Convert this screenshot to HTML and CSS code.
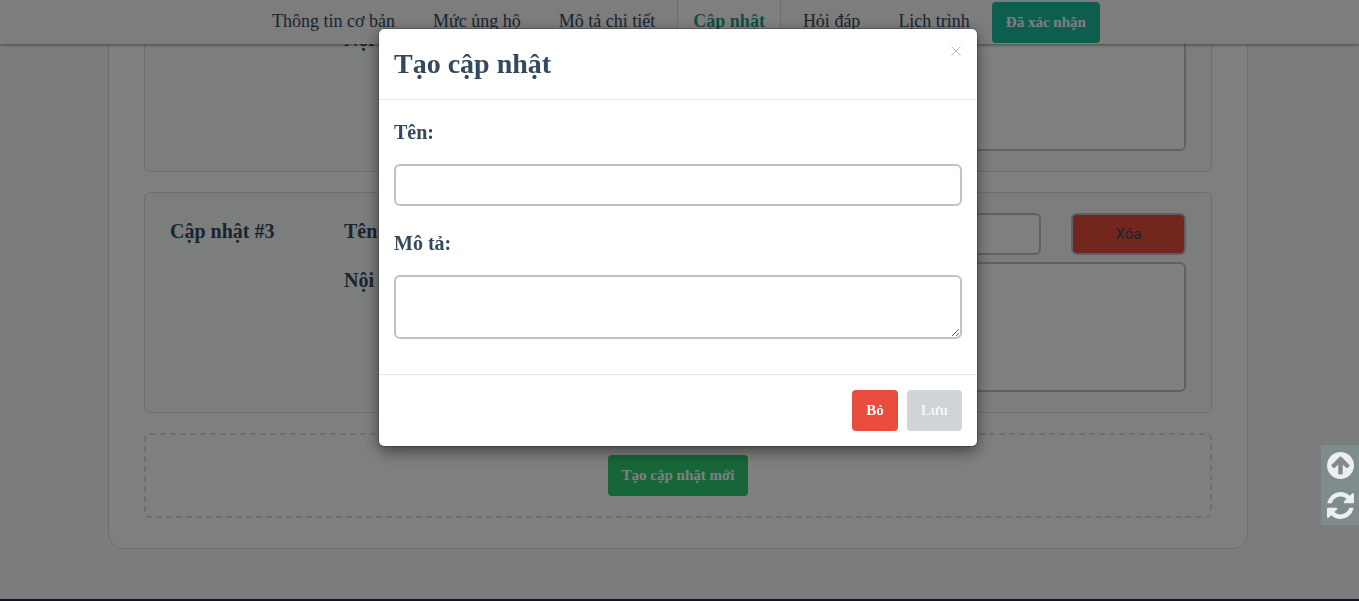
FILE: index.html
```html
<!DOCTYPE html>
<html lang="vi">
<head>
<meta charset="utf-8">
<meta name="viewport" content="width=device-width, initial-scale=1">
<title>Cập nhật</title>
<link rel="stylesheet" href="styles.css">
</head>
<body>
<header class="topbar">
  <nav class="tabs">
    <a class="tab" href="#info">Thông tin cơ bản</a>
    <a class="tab" href="#levels">Mức ủng hộ</a>
    <a class="tab" href="#detail">Mô tả chi tiết</a>
    <a class="tab tab-active" href="#updates">Cập nhật</a>
    <a class="tab" href="#faq">Hỏi đáp</a>
    <a class="tab" href="#schedule">Lịch trình</a>
    <button class="btn btn-verified" type="button">Đã xác nhận</button>
  </nav>
</header>

<main class="page">
  <section class="panel">
    <article class="card">
      <h2 class="card-title">Cập nhật #2</h2>
      <div class="fields">
        <label class="label" for="name2">Tên:</label>
        <input class="control" id="name2" type="text">
        <button class="control btn-delete" type="button">Xóa</button>
        <label class="label" for="body2">Nội dung:</label>
        <textarea class="control content" id="body2"></textarea>
      </div>
    </article>
    <article class="card">
      <h2 class="card-title">Cập nhật #3</h2>
      <div class="fields">
        <label class="label" for="name3">Tên:</label>
        <input class="control" id="name3" type="text">
        <button class="control btn-delete" type="button">Xóa</button>
        <label class="label" for="body3">Nội dung:</label>
        <textarea class="control content" id="body3"></textarea>
      </div>
    </article>
    <div class="add-box">
      <button class="btn btn-create" type="button">Tạo cập nhật mới</button>
    </div>
  </section>
</main>
<footer class="footer"></footer>

<div class="backdrop">
  <div class="modal" role="dialog" aria-modal="true" aria-labelledby="modal-title">
    <div class="modal-header">
      <h1 class="modal-title" id="modal-title">Tạo cập nhật</h1>
      <button class="close" type="button" aria-label="Đóng">
        <svg class="close-icon" viewBox="0 0 10 10"><path d="M.5.5l9 9M9.500.5l-9 9"/></svg>
      </button>
    </div>
    <form class="modal-body">
      <div class="group">
        <label class="modal-label" for="new-name">Tên:</label>
        <input class="control" id="new-name" type="text">
      </div>
      <div class="group">
        <label class="modal-label" for="new-desc">Mô tả:</label>
        <textarea class="control description" id="new-desc"></textarea>
      </div>
    </form>
    <div class="modal-footer">
      <button class="btn btn-cancel" type="button">Bỏ</button>
      <button class="btn btn-save" type="button" disabled>Lưu</button>
    </div>
  </div>
</div>

<aside class="side-tools">
  <button class="tool" type="button" aria-label="Lên đầu trang">
    <svg class="tool-icon" viewBox="0 0 1536 1536"><path d="M1284 767q0-27-18-45l-362-362-91-91q-18-18-45-18t-45 18l-91 91-362 362q-18 18-18 45t18 45l91 91q18 18 45 18t45-18l189-189v502q0 26 19 45t45 19h128q26 0 45-19t19-45v-502l189 189q19 19 45 19t45-19l91-91q18-18 18-45zm252 1q0 209-103 385.500t-279.500 279.500-385.500 103-385.500-103-279.500-279.500-103-385.500 103-385.500 279.500-279.500 385.500-103 385.500 103 279.500 279.500 103 385.500z"/></svg>
  </button>
  <button class="tool" type="button" aria-label="Tải lại">
    <svg class="tool-icon" viewBox="0 0 1536 1536"><path d="M1511 928q0 5-1 7-64 268-268 434.500t-478 166.500q-146 0-282.500-55t-243.500-157l-129 129q-19 19-45 19t-45-19-19-45v-448q0-26 19-45t45-19h448q26 0 45 19t19 45-19 45l-137 137q71 66 161 102t187 36q134 0 250-65t186-179q11-17 53-117 8-23 30-23h192q13 0 22.500 9.500t9.500 22.500zm25-800v448q0 26-19 45t-45 19h-448q-26 0-45-19t-19-45 19-45l138-138q-148-137-349-137-134 0-250 65t-186 179q-11 17-53 117-8 23-30 23h-199q-13 0-22.500-9.500t-9.500-22.500v-7q65-268 270-434.500t480-166.500q146 0 284 55.500t245 156.500l130-129q19-19 45-19t45 19 19 45z"/></svg>
  </button>
</aside>
</body>
</html>
```

FILE: styles.css
```css
* {
  box-sizing: border-box;
}

body {
  margin: 0;
  height: 100vh;
  display: flex;
  flex-direction: column;
  overflow: hidden;
  background: #f9f9f9;
  color: #34495e;
  font-family: "Liberation Serif", "Times New Roman", serif;
  font-size: 18px;
}

/* Top navigation */
.topbar {
  flex: none;
  position: relative;
  z-index: 1;
  padding-right: 3px;
  background: #fafafa;
  box-shadow: 0 1px 3px rgba(0, 0, 0, 0.45);
}

.tabs {
  display: flex;
  justify-content: center;
  align-items: center;
  gap: 6px;
}

.tab {
  padding: 0 15px 2px;
  border: 1px solid transparent;
  border-width: 0 1px;
  line-height: 42px;
  color: #34495e;
  text-decoration: none;
  white-space: nowrap;
}

.tab-active {
  background: #fff;
  border-color: #ddd;
  color: #16a085;
  font-weight: bold;
}

/* Buttons */
.btn {
  padding: 10px 14px;
  border: 0;
  border-radius: 4px;
  color: #fff;
  font: bold 15px/21px "Liberation Serif", "Times New Roman", serif;
  white-space: nowrap;
}

.btn-verified {
  background: #1abc9c;
}

.btn-create {
  background: #2ecc71;
}

.btn-cancel {
  background: #e74c3c;
}

.btn-save {
  background: #d0d4d7;
  color: #f4f5f6;
}

/* Page content, scrolled to its end */
.page {
  flex: 1;
  min-height: 0;
  display: flex;
  flex-direction: column;
  justify-content: flex-end;
  align-items: center;
  padding: 0 3px 50px 0;
}

.panel {
  flex: none;
  width: 100%;
  max-width: 1140px;
  display: flex;
  flex-direction: column;
  gap: 20px;
  padding: 30px 35px;
  background: #fff;
  border: 1px solid #ddd;
  border-radius: 15px;
}

.card {
  display: grid;
  grid-template-columns: 174px 1fr;
  padding: 20px 25px;
  background: #f8fcfa;
  border: 1px solid #ddd;
  border-radius: 6px;
}

.card-title,
.label {
  margin: 0;
  font-size: 20px;
  font-weight: bold;
  line-height: 36px;
}

.fields {
  display: grid;
  grid-template-columns: 116px 1fr 115px;
  column-gap: 30px;
  row-gap: 7px;
}

.control {
  display: block;
  width: 100%;
  height: 42px;
  padding: 8px 12px;
  background: #fff;
  border: 2px solid #bdc3c7;
  border-radius: 6px;
  color: #34495e;
  font: 15px/22px Roboto, sans-serif;
}

.content {
  grid-column: 2 / 4;
  height: 130px;
  resize: none;
}

.btn-delete {
  background: #e74c3c;
}

.add-box {
  display: flex;
  justify-content: center;
  padding: 20px;
  border: 2px dashed #ddd;
  border-radius: 6px;
}

.footer {
  flex: none;
  height: 2px;
  background: #2a2040;
}

/* Dialog */
.backdrop {
  position: fixed;
  inset: 0;
  z-index: 2;
  padding: 29px 3px 0 0;
  background: rgba(0, 0, 0, 0.5);
}

.modal {
  max-width: 598px;
  margin: 0 auto;
  background: #fff;
  border-radius: 5px;
  box-shadow: 0 0 0 1px rgba(0, 0, 0, 0.2), 0 5px 15px rgba(0, 0, 0, 0.5);
}

.modal-header {
  display: flex;
  justify-content: space-between;
  align-items: flex-start;
  padding: 15px;
  border-bottom: 1px solid #e5e5e5;
}

.modal-title {
  margin: 0;
  font-size: 28px;
  line-height: 40px;
}

.close {
  display: flex;
  padding: 2px 1px;
  background: none;
  border: 0;
}

.close-icon {
  width: 10px;
  height: 10px;
  stroke: #bbb;
  fill: none;
}

.modal-body {
  display: flex;
  flex-direction: column;
  gap: 5px;
  padding: 0 15px 35px;
}

.group {
  padding-top: 22px;
}

.modal-label {
  display: block;
  margin-bottom: 22px;
  font-size: 20px;
  font-weight: bold;
  line-height: 20px;
}

.description {
  height: 64px;
}

.modal-footer {
  display: flex;
  justify-content: flex-end;
  gap: 9px;
  padding: 15px;
  border-top: 1px solid #e5e5e5;
}

/* Shortcut buttons on the window's right edge */
.side-tools {
  position: fixed;
  right: 0;
  bottom: 76px;
  z-index: 3;
  background: #7f8c8d;
}

.tool {
  display: flex;
  padding: 7px 5px 6px 6px;
  background: none;
  border: 0;
}

.tool-icon {
  width: 27px;
  height: 27px;
  fill: #eee;
}
```
